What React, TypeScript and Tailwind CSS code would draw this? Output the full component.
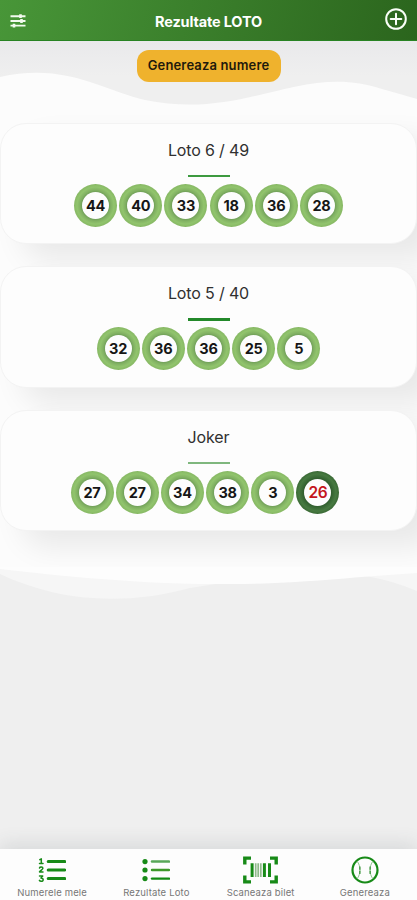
import React from 'react';

interface Draw {
  name: string;
  numbers: number[];
  joker?: number;
  line: string;
}

const draws: Draw[] = [
  { name: 'Loto 6 / 49', numbers: [44, 40, 33, 18, 36, 28], line: 'bg-[#3d9a40]' },
  { name: 'Loto 5 / 40', numbers: [32, 36, 36, 25, 5], line: 'bg-[#23892a]' },
  { name: 'Joker', numbers: [27, 27, 34, 38, 3], joker: 26, line: 'bg-[#7fb77e]' },
];

const Ball: React.FC<{ value: number; joker?: boolean }> = ({ value, joker = false }) => (
  <div
    className={`w-[43px] h-[43px] rounded-full flex items-center justify-center ${
      joker
        ? 'bg-[radial-gradient(circle_closest-side,#2f5c2d_62%,#3b6c37_74%,#477a41_86%,#3a6935_100%)]'
        : 'bg-[radial-gradient(circle_closest-side,#6f9f58_62%,#82b263_72%,#91c46d_86%,#87b864_100%)]'
    }`}
  >
    <div
      className={`w-[27px] h-[27px] rounded-full bg-[#fdfdfd] flex items-center justify-center ${
        joker ? 'text-[#c4161c] text-[15.5px] font-semibold' : 'text-[#161616] text-[14.5px] font-bold'
      }`}
    >
      <span className="pt-px leading-none tracking-[-0.2px]">{value}</span>
    </div>
  </div>
);

const DrawCard: React.FC<{ draw: Draw }> = ({ draw }) => (
  <section className="h-[121.5px] rounded-[26px] bg-[#fdfdfd] border border-[#f3f3f3] shadow-[22px_16px_30px_rgba(0,0,0,0.08)] flex flex-col items-center">
    <h2 className="mt-[14px] h-6 leading-6 text-[16px] tracking-[-0.15px] text-[#303030]">{draw.name}</h2>
    <div className={`mt-[13px] w-[42px] h-[2.5px] ${draw.line}`} />
    <div className={`mt-[6.5px] flex gap-[2.2px] ${draw.joker !== undefined ? 'mr-[7px]' : ''}`}>
      {draw.numbers.map((n, i) => (
        <Ball key={i} value={n} />
      ))}
      {draw.joker !== undefined && <Ball value={draw.joker} joker />}
    </div>
  </section>
);

const SlidersIcon = () => (
  <svg className="w-4 h-[14px]" viewBox="0 0 16 14" fill="none" stroke="#f3faf0" strokeWidth="1.9">
    <path d="M0.5 2.2h15M0.5 7h15M0.5 11.6h15" />
    <path d="M10.5 0.3v3.8M11.5 5.1v3.8M4 9.7v3.8" strokeWidth="2.6" />
  </svg>
);

const AddIcon = () => (
  <svg className="w-[22px] h-[22px]" viewBox="0 0 22 22" fill="none" stroke="#fafff8" strokeWidth="2">
    <circle cx="11" cy="11" r="9.8" />
    <path d="M11 5.7v10.6M5.7 11h10.6" strokeLinecap="round" />
  </svg>
);

const NumberListIcon = () => (
  <svg className="w-7 h-7" viewBox="0 0 28 28" fill="none" stroke="#178a17" strokeLinecap="round" strokeLinejoin="round">
    <path d="M10.2 5.6h16.6M10.2 14h16.6M10.2 22.6h16.6" strokeWidth="3" />
    <path d="M1.8 3.6l1.5-.8v4.8M1.5 7.6h3.5M1.5 12c.4-1.3 3.4-1.3 3.4.3 0 1.2-2.4 2-3.4 3.6h3.5M1.5 20.1h3.2l-1.7 2c3 0 2.7 3.2.2 3.2-.9 0-1.5-.3-1.8-.9" strokeWidth="1.5" />
  </svg>
);

const BulletListIcon = () => (
  <svg className="w-7 h-7" viewBox="0 0 28 28" fill="none" strokeLinecap="round">
    <path d="M10 5.6h17" stroke="#58a758" strokeWidth="2.5" />
    <path d="M10 14h17" stroke="#3e982a" strokeWidth="2.4" />
    <path d="M10 22.6h17" stroke="#128a12" strokeWidth="2.4" />
    <g fill="#178a17">
      <circle cx="3" cy="5.6" r="2.6" />
      <circle cx="3" cy="14" r="2.6" />
      <circle cx="3" cy="22.6" r="2.6" />
    </g>
  </svg>
);

const BarcodeIcon = () => (
  <svg className="w-[35px] h-7" viewBox="0 0 35 28" fill="none" stroke="#178a17">
    <path d="M1.8 8.5V2.1H8M27 2.1h6.2v6.4M33.2 19.5v6.4H27M8 25.9H1.8v-6.4" strokeWidth="3.4" />
    <path d="M9.1 7.3v13.6M21.4 7.3v13.6M26.5 7.3v13.6" strokeWidth="3" />
    <path d="M12.7 7.3v13.6M15.2 7.3v13.6M17.8 7.3v13.6" stroke="#8fb98b" strokeWidth="1.7" />
  </svg>
);

const BallIcon = () => (
  <svg className="w-7 h-7" viewBox="0 0 28 28" fill="none" stroke="#178a17">
    <circle cx="14" cy="14" r="12.5" strokeWidth="2.2" />
    <path d="M6 5c4 5.3 4 12.7 0 18M22 5c-4 5.3-4 12.7 0 18" stroke="#8fc48f" strokeWidth="1" />
    <path d="M8.8 10.5v7.5M19.2 10.5v7.5" stroke="#4f9f4f" strokeWidth="1.5" strokeDasharray="3.2 1" />
  </svg>
);

const tabs = [
  { label: 'Numerele mele', icon: <NumberListIcon /> },
  { label: 'Rezultate Loto', icon: <BulletListIcon /> },
  { label: 'Scaneaza bilet', icon: <BarcodeIcon /> },
  { label: 'Genereaza', icon: <BallIcon /> },
];

const App: React.FC = () => {
  return (
    <div className="relative isolate h-[900px] w-full overflow-hidden bg-[#efefef] flex flex-col font-['Inter',sans-serif]">
      {/* white area with wavy edges behind the cards */}
      <svg className="absolute inset-0 -z-10 w-full h-full" viewBox="0 0 417 900" preserveAspectRatio="none">
        <defs>
          <linearGradient id="top" x1="0" y1="0" x2="0" y2="1">
            <stop offset="0" stopColor="#e9e9eb" />
            <stop offset="0.5" stopColor="#efefef" />
          </linearGradient>
        </defs>
        <rect y="41" width="417" height="70" fill="url(#top)" />
        <path d="M0 77C65 62 105 91 145 100C245 121 302 62 382 89Q400 94 417 99V568H0Z" fill="#fcfcfc" />
        <path d="M0 568H417V591C340 558 260 577 190 588C120 607 55 600 0 574Z" fill="#f6f6f6" />
        <path d="M0 567H417V573C350 577 300 584 230 584C150 585 60 576 0 569Z" fill="#fdfdfd" />
      </svg>

      <header className="h-[41px] shrink-0 flex items-center justify-between px-[10px] bg-linear-[105deg,#489638,#2b651d] border-b border-[#288323]">
        <div className="w-[22px] flex pt-[2px]">
          <SlidersIcon />
        </div>
        <h1 className="text-white text-[14.5px] font-bold pt-1 tracking-[-0.15px]">Rezultate LOTO</h1>
        <div className="-mt-[3px]">
          <AddIcon />
        </div>
      </header>

      <main className="flex-1 flex flex-col">
        <button
          type="button"
          className="mt-[8.5px] mb-[21px] w-[144px] h-8 shrink-0 self-center rounded-xl bg-[#efb22d] text-[#1f1a0c] text-[13px] tracking-[0.15px] font-semibold pt-px"
        >
          Genereaza numere
        </button>
        {/* the last card's shadow stops at the lower wave */}
        <div className="flex flex-col gap-[22px] pt-[20.25px] pb-[36px] overflow-hidden">
          {draws.map(draw => (
            <DrawCard key={draw.name} draw={draw} />
          ))}
        </div>
      </main>

      <nav className="h-[51px] shrink-0 grid grid-cols-4 bg-[#fdfdfd] shadow-[0_-4px_20px_rgba(60,70,75,0.14)]">
        {tabs.map(tab => (
          <div key={tab.label} className="flex flex-col items-center pt-[7px]">
            {tab.icon}
            <span className="mt-[3px] text-[9.5px] tracking-[0.15px] leading-3 text-[#777] whitespace-nowrap">{tab.label}</span>
          </div>
        ))}
      </nav>
    </div>
  );
};

export default App;
